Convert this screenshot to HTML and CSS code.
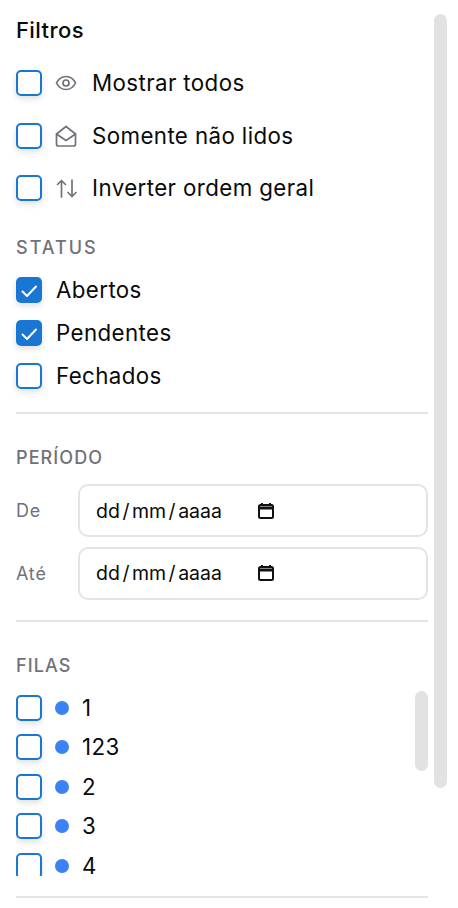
FILE: index.html
```html
<!DOCTYPE html>
<html lang="pt-BR">
<head>
  <meta charset="UTF-8" />
  <title>Filtros</title>
  <link rel="stylesheet" href="styles.css">
</head>
<body>
  <div class="panel">
    <h2 class="title">Filtros</h2>

    <div class="options">
      <label class="option">
        <span class="box"></span>
        <svg class="opt-icon" viewBox="0 0 24 24"><path d="M2.500 12C4.500 7.800 8 5.500 12 5.500s7.500 2.300 9.500 6.500c-2 4.200-5.500 6.500-9.500 6.500S4.500 16.200 2.500 12z"/><circle cx="12" cy="12" r="3"/></svg>
        <span class="text">Mostrar todos</span>
      </label>
      <label class="option">
        <span class="box"></span>
        <svg class="opt-icon" viewBox="0 0 24 24"><path d="M2.500 10 12 2.500 21.500 10v10a2 2 0 0 1-2 2h-15a2 2 0 0 1-2-2z"/><path d="m2.500 10 9.500 6.500 9.500-6.500"/></svg>
        <span class="text">Somente não lidos</span>
      </label>
      <label class="option">
        <span class="box"></span>
        <svg class="opt-icon" viewBox="0 0 24 24"><path d="M7.500 21V4.500M3.500 8.500l4-4 4 4"/><path d="M18 4v16.500M14 16.500l4 4 4-4"/></svg>
        <span class="text">Inverter ordem geral</span>
      </label>
    </div>

    <div class="section-label status-label">STATUS</div>
    <div class="status-list">
      <label class="check"><span class="box checked"><svg viewBox="0 0 26 26"><path d="m6.500 14.500 4.500 4.500 9-9.500"/></svg></span><span class="text">Abertos</span></label>
      <label class="check"><span class="box checked"><svg viewBox="0 0 26 26"><path d="m6.500 14.500 4.500 4.500 9-9.500"/></svg></span><span class="text">Pendentes</span></label>
      <label class="check"><span class="box"></span><span class="text">Fechados</span></label>
    </div>

    <hr class="divider first">

    <div class="section-label">PERÍODO</div>
    <div class="dates">
      <div class="date-row">
        <span class="date-label">De</span>
        <div class="date-input">
          <span class="date-text">dd<i class="slash">/</i>mm<i class="slash">/</i>aaaa</span>
          <svg class="cal" viewBox="0 0 18 18"><path d="M5 1v2M13 1v2"/><rect x="2" y="3" width="14" height="13" rx="1.500"/><path class="cal-bar" d="M2 6h14"/></svg>
        </div>
      </div>
      <div class="date-row">
        <span class="date-label">Até</span>
        <div class="date-input">
          <span class="date-text">dd<i class="slash">/</i>mm<i class="slash">/</i>aaaa</span>
          <svg class="cal" viewBox="0 0 18 18"><path d="M5 1v2M13 1v2"/><rect x="2" y="3" width="14" height="13" rx="1.500"/><path class="cal-bar" d="M2 6h14"/></svg>
        </div>
      </div>
    </div>

    <hr class="divider second">

    <div class="section-label">FILAS</div>
    <div class="queues">
      <div class="queue-list">
        <label class="queue"><span class="box"></span><span class="dot"></span><span class="text">1</span></label>
        <label class="queue"><span class="box"></span><span class="dot"></span><span class="text">123</span></label>
        <label class="queue"><span class="box"></span><span class="dot"></span><span class="text">2</span></label>
        <label class="queue"><span class="box"></span><span class="dot"></span><span class="text">3</span></label>
        <label class="queue"><span class="box"></span><span class="dot"></span><span class="text">4</span></label>
      </div>
      <div class="thumb inner-thumb"></div>
    </div>

    <hr class="divider last">
  </div>
  <div class="thumb outer-thumb"></div>
</body>
</html>
```

FILE: styles.css
```css
html, body {
  margin: 0;
  padding: 0;
  background: white;
  overflow: hidden;
  height: 908px;
}

body {
  display: flex;
  font-family: 'Inter', sans-serif;
  font-optical-sizing: none;
  font-variation-settings: 'opsz' 14;
  color: #0a0a0a;
}

.panel {
  width: 412px;
  margin-left: 16px;
  padding-top: 17px;
  flex: none;
}

.title {
  margin: 0;
  font-size: 22px;
  line-height: 27px;
  font-weight: 450;
  letter-spacing: 0.400px;
}

.options {
  display: flex;
  flex-direction: column;
  gap: 26.500px;
  margin-top: 26px;
}

.option {
  display: flex;
  align-items: center;
  height: 26px;
  font-size: 22.300px;
}

.text {
  letter-spacing: 0.400px;
  margin-bottom: 1px;
}

.opt-icon {
  width: 24px;
  height: 24px;
  margin: 0 14px 0 12px;
  fill: none;
  stroke: #71717a;
  stroke-width: 1.700;
  stroke-linecap: round;
  stroke-linejoin: round;
  flex: none;
}

.box {
  width: 26px;
  height: 26px;
  box-sizing: border-box;
  border: 2px solid #1976d2;
  border-radius: 5px;
  background: white;
  box-shadow: 0 3px 6px rgba(0, 0, 0, 0.12);
  flex: none;
  display: block;
}

.box.checked {
  background: #1976d2;
  border: none;
}

.box svg {
  display: block;
  width: 26px;
  height: 26px;
  fill: none;
  stroke: white;
  stroke-width: 2;
  stroke-linecap: round;
  stroke-linejoin: round;
}

.section-label {
  font-size: 18px;
  line-height: 24px;
  font-weight: 500;
  letter-spacing: 1.100px;
  color: #71717a;
}

.status-label {
  margin-top: 35px;
  letter-spacing: 2px;
}

.status-list {
  display: flex;
  flex-direction: column;
  gap: 17px;
  margin-top: 17px;
}

.check {
  display: flex;
  align-items: center;
  gap: 14px;
  height: 26px;
  font-size: 22.300px;
}

.divider {
  border: none;
  height: 2px;
  background: #e4e4e7;
}

.divider.first {
  margin: 23px 0 32px;
}

.divider.second {
  margin: 20px 0 32px;
}

.divider.last {
  margin: 20px 0 0;
}

.dates {
  display: flex;
  flex-direction: column;
  gap: 9.500px;
  margin-top: 14px;
}

.date-row {
  display: flex;
  align-items: center;
}

.date-label {
  width: 62px;
  font-size: 18px;
  letter-spacing: 0.800px;
  color: #71717a;
  flex: none;
}

.date-input {
  flex: 1;
  height: 53px;
  box-sizing: border-box;
  border: 2px solid #e4e4e7;
  border-radius: 10px;
  display: flex;
  align-items: center;
  padding-left: 16px;
}

.date-text {
  font-size: 19.500px;
  width: 160px;
}

.slash {
  font-style: normal;
  margin: 0 2.500px;
}

.cal {
  width: 18px;
  height: 18px;
  margin-left: 1px;
  fill: none;
  stroke: #111;
  stroke-width: 2;
  flex: none;
}

.cal .cal-bar {
  stroke-width: 3;
}

.queues {
  position: relative;
  height: 181px;
  padding-top: 4px;
  margin-top: 13px;
  overflow: hidden;
}

.queue-list {
  display: flex;
  flex-direction: column;
  gap: 13.500px;
}

.queue {
  display: flex;
  align-items: center;
  height: 26px;
  font-size: 22.300px;
}

.dot {
  width: 14px;
  height: 14px;
  border-radius: 50%;
  background: #3b82f6;
  margin: 0 13px 0 13px;
  flex: none;
}

.thumb {
  background: #e2e2e2;
  border-radius: 7px;
  width: 13px;
}

.inner-thumb {
  position: absolute;
  right: 0;
  top: 0;
  height: 80px;
}

.outer-thumb {
  height: 774px;
  margin: 14px 0 0 6px;
  flex: none;
}
```
